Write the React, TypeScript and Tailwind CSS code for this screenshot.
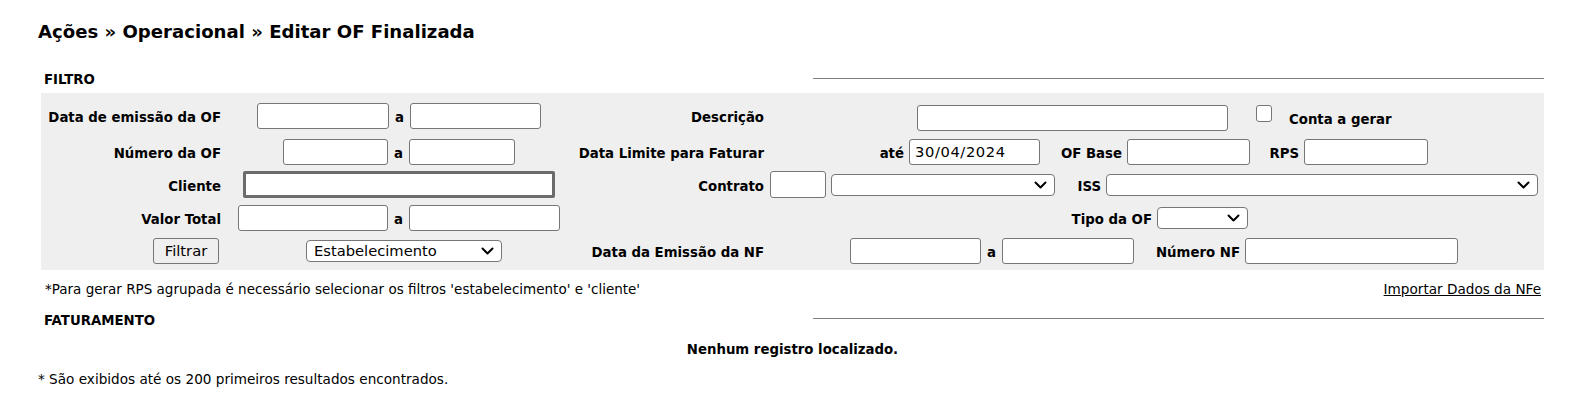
import React from 'react';

function Chevron() {
  return (
    <svg width="13" height="8" viewBox="0 0 13 8" fill="none">
      <polyline
        points="1.5,1.5 6.5,6.5 11.5,1.5"
        stroke="#000"
        strokeWidth="2"
        strokeLinecap="round"
        strokeLinejoin="round"
      />
    </svg>
  );
}

function TextInput({ className = '', value = '' }: { className?: string; value?: string }) {
  return (
    <input
      type="text"
      readOnly
      defaultValue={value}
      className={`h-[26px] shrink-0 rounded-[3px] border border-[#767676] bg-white pl-[5px] text-[14.7px] text-black outline-none ${className}`}
    />
  );
}

function Select({ className = '', value = '' }: { className?: string; value?: string }) {
  return (
    <div className={`relative h-[22px] shrink-0 ${className}`}>
      <select
        defaultValue={value}
        className="h-full w-full appearance-none rounded-[4px] border border-[#767676] bg-white pl-[7px] text-[14.7px] text-black outline-none"
      >
        <option value={value}>{value}</option>
      </select>
      <span className="pointer-events-none absolute right-[8px] top-1/2 flex -translate-y-1/2">
        <Chevron />
      </span>
    </div>
  );
}

function Label({ children, className = '' }: { children: React.ReactNode; className?: string }) {
  return <span className={`font-bold whitespace-nowrap ${className}`}>{children}</span>;
}

function Sep() {
  return <span className="w-[21px] shrink-0 pt-[4px] text-center font-bold">a</span>;
}

function Box({ w, children }: { w: string; children: React.ReactNode }) {
  return (
    <div className={`${w} flex shrink-0 justify-end pr-[5px] pt-[4px]`}>
      <Label>{children}</Label>
    </div>
  );
}

export default function App() {
  const colA = 'w-[186px] shrink-0 pr-[6px] pt-[4px] text-right font-bold';
  const colB = 'w-[344px] shrink-0 flex items-center justify-center';
  const colC = 'w-[196px] shrink-0 pr-[3px] pt-[4px] text-right font-bold';

  return (
    <div className="min-h-[418px] bg-white pt-[21px] font-['DejaVu_Sans',Verdana,sans-serif] text-[13.3px] leading-[16px] text-black">
      <h1 className="ml-[38px] text-[18.1px] font-bold leading-[22px]">
        Ações » Operacional » Editar OF Finalizada
      </h1>

      <div className="ml-[41px] w-[1503px]">
        {/* FILTRO */}
        <div className="mt-[29px] flex h-[16px]">
          <span className="pl-[3px] font-bold">FILTRO</span>
          <div className="ml-auto mt-[6px] h-px w-[731px] bg-[#808080]" />
        </div>

        <div className="mt-[5px] bg-[#efefef] pt-[4px] pb-[3px]">
          {/* row 1 */}
          <div className="flex h-[38px] items-center">
            <div className={colA}>Data de emissão da OF</div>
            <div className={colB}>
              <TextInput className="w-[132px]" />
              <Sep />
              <TextInput className="w-[131px]" />
            </div>
            <div className={colC}>Descrição</div>
            <div className="flex items-center">
              <TextInput className="ml-[150px] mt-[4px] w-[311px]" />
              <input
                type="checkbox"
                readOnly
                className="mb-[5px] ml-[28px] h-[17px] w-[16px] appearance-none rounded-[3px] border border-[#767676] bg-white"
              />
              <Label className="ml-[17px] mt-[8px]">Conta a gerar</Label>
            </div>
          </div>

          {/* row 2 */}
          <div className="flex h-[33px] items-center">
            <div className={colA}>Número da OF</div>
            <div className={colB}>
              <TextInput className="w-[105px]" />
              <Sep />
              <TextInput className="w-[106px]" />
            </div>
            <div className={colC}>Data Limite para Faturar</div>
            <div className="flex items-center">
              <Box w="w-[142px]">até</Box>
              <TextInput className="w-[131px] tracking-[0.6px]" value="30/04/2024" />
              <Box w="w-[87px]">OF Base</Box>
              <TextInput className="w-[123px]" />
              <Box w="w-[54px]">RPS</Box>
              <TextInput className="w-[124px]" />
            </div>
          </div>

          {/* row 3 */}
          <div className="flex h-[33px] items-center">
            <div className={colA}>Cliente</div>
            <div className={colB}>
              <input
                type="text"
                readOnly
                className="h-[27px] w-[312px] rounded-[2px] border-[3px] border-[#6b6b6b] bg-white outline-none"
              />
            </div>
            <div className={colC}>Contrato</div>
            <div className="flex items-center">
              <TextInput className="ml-[3px] h-[27px] w-[56px]" />
              <Select className="ml-[5px] w-[224px]" />
              <Box w="w-[51px]">ISS</Box>
              <Select className="w-[432px]" />
            </div>
          </div>

          {/* row 4 */}
          <div className="flex h-[33px] items-center">
            <div className={colA}>Valor Total</div>
            <div className={colB}>
              <TextInput className="w-[150px]" />
              <Sep />
              <TextInput className="w-[151px]" />
            </div>
            <div className={colC} />
            <div className="flex items-center">
              <Box w="w-[390px]">Tipo da OF</Box>
              <Select className="w-[91px]" />
            </div>
          </div>

          {/* row 5 */}
          <div className="flex h-[33px] items-center">
            <div className="flex w-[186px] shrink-0 justify-end pr-[8px]">
              <button className="h-[26px] w-[66px] rounded-[3px] border border-[#767676] bg-[#efefef] text-[14.7px] text-black">
                Filtrar
              </button>
            </div>
            <div className={colB}>
              <Select className="ml-[10px] w-[196px]" value="Estabelecimento" />
            </div>
            <div className={colC}>Data da Emissão da NF</div>
            <div className="flex items-center">
              <TextInput className="ml-[83px] w-[131px]" />
              <Sep />
              <TextInput className="w-[132px]" />
              <Box w="w-[111px]">Número NF</Box>
              <TextInput className="w-[213px]" />
            </div>
          </div>
        </div>

        {/* note + link */}
        <div className="mt-[11px] flex h-[16px] justify-between">
          <span className="pl-[4px] text-[13.5px]">
            *Para gerar RPS agrupada é necessário selecionar os filtros 'estabelecimento' e 'cliente'
          </span>
          <a href="#" className="pr-[3px] text-[13.6px] text-black underline">
            Importar Dados da NFe
          </a>
        </div>

        {/* FATURAMENTO */}
        <div className="mt-[16px] flex h-[16px]">
          <span className="pl-[3px] font-bold">FATURAMENTO</span>
          <div className="ml-auto mt-[5px] h-px w-[731px] bg-[#808080]" />
        </div>

        <div className="mt-[13px] h-[16px] text-center font-bold">Nenhum registro localizado.</div>
      </div>

      <p className="ml-[38px] mt-[13px] text-[13.6px] leading-[16px]">
        * São exibidos até os 200 primeiros resultados encontrados.
      </p>
    </div>
  );
}
